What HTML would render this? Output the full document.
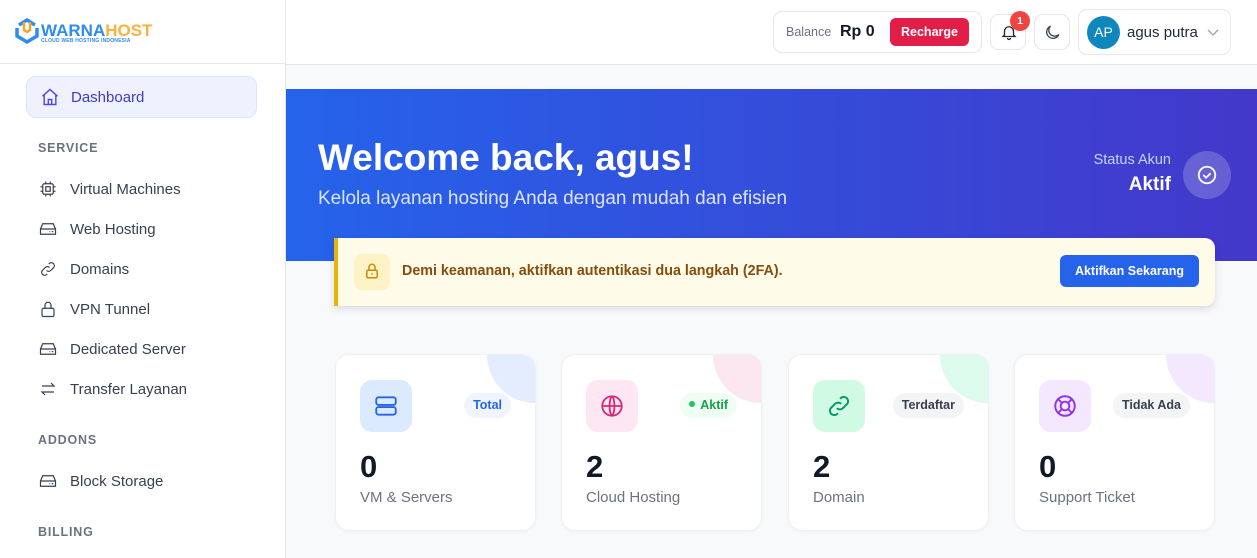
<!DOCTYPE html>
<html><head><meta charset="utf-8"><style>
*{box-sizing:border-box;margin:0;padding:0}
body{width:1257px;height:558px;overflow:hidden;font-family:"Liberation Sans",sans-serif;background:#f8f9fb;position:relative;color:#111827}
.sb{position:absolute;left:0;top:0;width:286px;height:558px;background:#fff;border-right:1px solid #e5e7eb}
.logo{height:64px;border-bottom:1px solid #e5e7eb;position:relative}
.nav{position:absolute;left:26px;width:231px;height:42px;display:flex;align-items:center;font-size:15px;color:#374151}
.nav svg{position:absolute;left:13px}
.nav span{position:absolute;left:44px}
.act{background:#eef2ff;border:1px solid #dfe3fb;border-radius:10px;color:#4338ca}
.sec{position:absolute;left:38px;font-size:12.5px;font-weight:bold;color:#6b7280;letter-spacing:.8px}
.hdr{position:absolute;left:286px;top:0;right:0;height:65px;background:#fff;border-bottom:1px solid #e5e7eb}
.box{position:absolute;border:1px solid #e5e7eb;border-radius:9px;background:#fff}
.banner{position:absolute;left:286px;top:89px;width:971px;height:172px;background:linear-gradient(90deg,#2563eb,#4338ca)}
.alert{position:absolute;left:334px;top:238px;width:881px;height:68px;background:#fefbe8;border-left:4px solid #eab308;border-radius:0 10px 10px 0;box-shadow:0 3px 8px rgba(0,0,0,.12)}
.card{position:absolute;top:354px;width:201px;height:177px;background:#fff;border:1px solid #eef0f3;border-radius:14px;overflow:hidden;box-shadow:0 1px 3px rgba(0,0,0,.04)}
.card .dec{position:absolute;right:-48px;top:-48px;width:96px;height:96px;border-radius:50%}
.card .ic{position:absolute;left:24px;top:25px;width:52px;height:52px;border-radius:12px;display:flex;align-items:center;justify-content:center}
.card .bd{position:absolute;right:24px;top:38px;height:25px;padding:0 9px;border-radius:13px;font-size:12.5px;font-weight:bold;line-height:25px}
.card .n{position:absolute;left:24px;top:94px;font-size:31px;font-weight:bold;color:#111827}
.card .l{position:absolute;left:24px;top:134px;font-size:15px;color:#6b7280}
</style></head><body>
<div class="sb">
 <div class="logo">
  <svg style="position:absolute;left:15px;top:18px" width="24" height="26" viewBox="0 0 24 26"><path d="M4 7 L12 2 L20 7 M2 10 V18 L12 24 L22 18 V10" fill="none" stroke="#2f8cf0" stroke-width="3.5"/><path d="M9 4 V12 L12 14 L15 12 V4" fill="none" stroke="#f6a623" stroke-width="2.5"/></svg>
  <div style="position:absolute;left:41px;top:21px;font-size:17px;font-weight:bold;letter-spacing:0"><span style="color:#2f8cf0">WARNA</span><span style="color:#fbb13c">HOST</span></div>
  <div style="position:absolute;left:41px;top:38px;font-size:5px;color:#2f8cf0;font-weight:bold;letter-spacing:.2px">CLOUD WEB HOSTING INDONESIA</div>
 </div>
 <div class="nav act" style="top:76px"><svg width="20" height="20" viewBox="0 0 24 24" fill="none" stroke="#4f46e5" stroke-width="1.7"><path d="M3 11 L12 3 L21 11 M5 9.5 V21 H19 V9.5 M10 21 V15 H14 V21"/></svg><span>Dashboard</span></div>
 <div class="sec" style="top:141px">SERVICE</div>
 <div class="nav" style="top:168px"><svg width="18" height="18" viewBox="0 0 24 24" fill="none" stroke="#374151" stroke-width="1.6"><rect x="5" y="5" width="14" height="14" rx="2"/><rect x="9" y="9" width="6" height="6"/><path d="M9 2v3M15 2v3M9 19v3M15 19v3M2 9h3M2 15h3M19 9h3M19 15h3"/></svg><span>Virtual Machines</span></div>
 <div class="nav" style="top:208px"><svg width="18" height="18" viewBox="0 0 24 24" fill="none" stroke="#374151" stroke-width="1.6"><path d="M2 12 L5 5 H19 L22 12 M2 12 H22 V19 H2 Z M2 12"/><path d="M17 15.5h2M14 15.5h1"/></svg><span>Web Hosting</span></div>
 <div class="nav" style="top:248px"><svg width="18" height="18" viewBox="0 0 24 24" fill="none" stroke="#374151" stroke-width="1.6"><path d="M10 14a4 4 0 0 0 5.6 0l4-4a4 4 0 0 0-5.6-5.6l-1 1M14 10a4 4 0 0 0-5.6 0l-4 4a4 4 0 0 0 5.6 5.6l1-1"/></svg><span>Domains</span></div>
 <div class="nav" style="top:288px"><svg width="18" height="18" viewBox="0 0 24 24" fill="none" stroke="#374151" stroke-width="1.6"><rect x="4" y="11" width="16" height="11" rx="2"/><path d="M8 11V7a4 4 0 0 1 8 0v4"/></svg><span>VPN Tunnel</span></div>
 <div class="nav" style="top:328px"><svg width="18" height="18" viewBox="0 0 24 24" fill="none" stroke="#374151" stroke-width="1.6"><path d="M2 12 L5 5 H19 L22 12 M2 12 H22 V19 H2 Z"/><path d="M17 15.5h2M14 15.5h1"/></svg><span>Dedicated Server</span></div>
 <div class="nav" style="top:368px"><svg width="18" height="18" viewBox="0 0 24 24" fill="none" stroke="#374151" stroke-width="1.6"><path d="M4 8h16l-4-4M20 16H4l4 4"/></svg><span>Transfer Layanan</span></div>
 <div class="sec" style="top:433px">ADDONS</div>
 <div class="nav" style="top:460px"><svg width="18" height="18" viewBox="0 0 24 24" fill="none" stroke="#374151" stroke-width="1.6"><path d="M2 12 L5 5 H19 L22 12 M2 12 H22 V19 H2 Z"/><path d="M17 15.5h2M14 15.5h1"/></svg><span>Block Storage</span></div>
 <div class="sec" style="top:525px">BILLING</div>
</div>
<div class="hdr">
 <div class="box" style="left:487px;top:11px;width:209px;height:42px">
  <span style="position:absolute;left:12px;top:13px;font-size:12.5px;color:#6b7280">Balance</span>
  <span style="position:absolute;left:66px;top:11px;font-size:16px;font-weight:bold;color:#111827">Rp 0</span>
  <div style="position:absolute;left:116px;top:6px;width:79px;height:28px;background:#e11d48;border-radius:6px;color:#fff;font-size:12.5px;font-weight:bold;text-align:center;line-height:28px">Recharge</div>
 </div>
 <div class="box" style="left:704px;top:14px;width:36px;height:36px"><svg style="position:absolute;left:9px;top:8px" width="18" height="18" viewBox="0 0 24 24" fill="none" stroke="#1f2937" stroke-width="1.8"><path d="M6 16V11a6 6 0 0 1 12 0v5l2 2H4z M10 20a2 2 0 0 0 4 0"/></svg>
  <div style="position:absolute;left:19px;top:-4px;width:20px;height:20px;border-radius:50%;background:#ef4444;color:#fff;font-size:10.5px;font-weight:bold;text-align:center;line-height:20px">1</div></div>
 <div class="box" style="left:748px;top:14px;width:36px;height:36px"><svg style="position:absolute;left:8px;top:8px" width="19" height="19" viewBox="0 0 24 24" fill="none" stroke="#374151" stroke-width="1.6"><path d="M20 14.5A8 8 0 1 1 9.5 4a6.5 6.5 0 0 0 10.5 10.5z"/></svg></div>
 <div class="box" style="left:792px;top:9px;width:153px;height:46px">
  <div style="position:absolute;left:8px;top:6px;width:33px;height:33px;border-radius:50%;background:#0e87be;color:#fff;font-size:14px;text-align:center;line-height:33px">AP</div>
  <span style="position:absolute;left:48px;top:14px;font-size:15px;color:#1f2937">agus putra</span>
  <svg style="position:absolute;left:128px;top:19px" width="12" height="8" viewBox="0 0 12 8" fill="none" stroke="#9ca3af" stroke-width="1.3"><path d="M1 1l5 5 5-5"/></svg>
 </div>
</div>
<div class="banner">
 <div style="position:absolute;left:32px;top:48px;font-size:37px;font-weight:bold;color:#fff">Welcome back, agus!</div>
 <div style="position:absolute;left:32px;top:99px;font-size:19px;color:#dbe4ff">Kelola layanan hosting Anda dengan mudah dan efisien</div>
 <div style="position:absolute;right:86px;top:63px;font-size:14.5px;color:#c7d2fe;text-align:right">Status Akun</div>
 <div style="position:absolute;right:86px;top:85px;font-size:19px;font-weight:bold;color:#fff">Aktif</div>
 <div style="position:absolute;left:897px;top:62px;width:48px;height:48px;border-radius:50%;background:rgba(255,255,255,.2)"><svg style="position:absolute;left:13px;top:13px" width="22" height="22" viewBox="0 0 24 24" fill="none" stroke="#fff" stroke-width="2"><circle cx="12" cy="12" r="9"/><path d="M8 12l3 3 5-5"/></svg></div>
</div>
<div class="alert">
 <div style="position:absolute;left:16px;top:16px;width:36px;height:36px;border-radius:8px;background:#fef3c7"><svg style="position:absolute;left:9px;top:8px" width="18" height="18" viewBox="0 0 24 24" fill="none" stroke="#ca8a04" stroke-width="2"><rect x="5" y="11" width="14" height="10" rx="2"/><path d="M8 11V7a4 4 0 0 1 8 0v4M12 15v2"/></svg></div>
 <div style="position:absolute;left:64px;top:25px;font-size:14.3px;font-weight:bold;color:#854d0e">Demi keamanan, aktifkan autentikasi dua langkah (2FA).</div>
 <div style="position:absolute;left:722px;top:17px;width:139px;height:32px;border-radius:6px;background:#2563eb;color:#fff;font-size:12.5px;font-weight:bold;text-align:center;line-height:32px">Aktifkan Sekarang</div>
</div>
<div class="card" style="left:335px"><div class="dec" style="background:#e3edfd"></div>
 <div class="ic" style="background:#dbeafe"><svg width="26" height="26" viewBox="0 0 24 24" fill="none" stroke="#2563eb" stroke-width="1.7"><rect x="3" y="4" width="18" height="7" rx="2"/><rect x="3" y="13" width="18" height="7" rx="2"/><path d="M17 7.5h.01M17 16.5h.01"/></svg></div>
 <div class="bd" style="background:#eff4ff;color:#2563eb">Total</div><div class="n">0</div><div class="l">VM &amp; Servers</div></div>
<div class="card" style="left:561px"><div class="dec" style="background:#fce7f1"></div>
 <div class="ic" style="background:#fce7f3"><svg width="26" height="26" viewBox="0 0 24 24" fill="none" stroke="#db2777" stroke-width="1.7"><circle cx="12" cy="12" r="9"/><path d="M3 12h18M12 3c3 3 3 15 0 18M12 3c-3 3-3 15 0 18"/></svg></div>
 <div class="bd" style="background:#f0fdf4;color:#16a34a"><span style="display:inline-block;width:6px;height:6px;border-radius:50%;background:#22c55e;margin-right:5px;vertical-align:2px"></span>Aktif</div><div class="n">2</div><div class="l">Cloud Hosting</div></div>
<div class="card" style="left:788px"><div class="dec" style="background:#dcfbec"></div>
 <div class="ic" style="background:#d1fae5"><svg width="26" height="26" viewBox="0 0 24 24" fill="none" stroke="#059669" stroke-width="1.8"><path d="M10 14a4 4 0 0 0 5.6 0l4-4a4 4 0 0 0-5.6-5.6l-1 1M14 10a4 4 0 0 0-5.6 0l-4 4a4 4 0 0 0 5.6 5.6l1-1"/></svg></div>
 <div class="bd" style="background:#f3f4f6;color:#374151">Terdaftar</div><div class="n">2</div><div class="l">Domain</div></div>
<div class="card" style="left:1014px"><div class="dec" style="background:#f3e8ff"></div>
 <div class="ic" style="background:#f3e8ff"><svg width="26" height="26" viewBox="0 0 24 24" fill="none" stroke="#9333ea" stroke-width="1.8"><circle cx="12" cy="12" r="9"/><circle cx="12" cy="12" r="4"/><path d="M5.6 5.6l3.6 3.6M14.8 14.8l3.6 3.6M18.4 5.6l-3.6 3.6M9.2 14.8l-3.6 3.6"/></svg></div>
 <div class="bd" style="background:#f3f4f6;color:#374151">Tidak Ada</div><div class="n">0</div><div class="l">Support Ticket</div></div>
</body></html>
